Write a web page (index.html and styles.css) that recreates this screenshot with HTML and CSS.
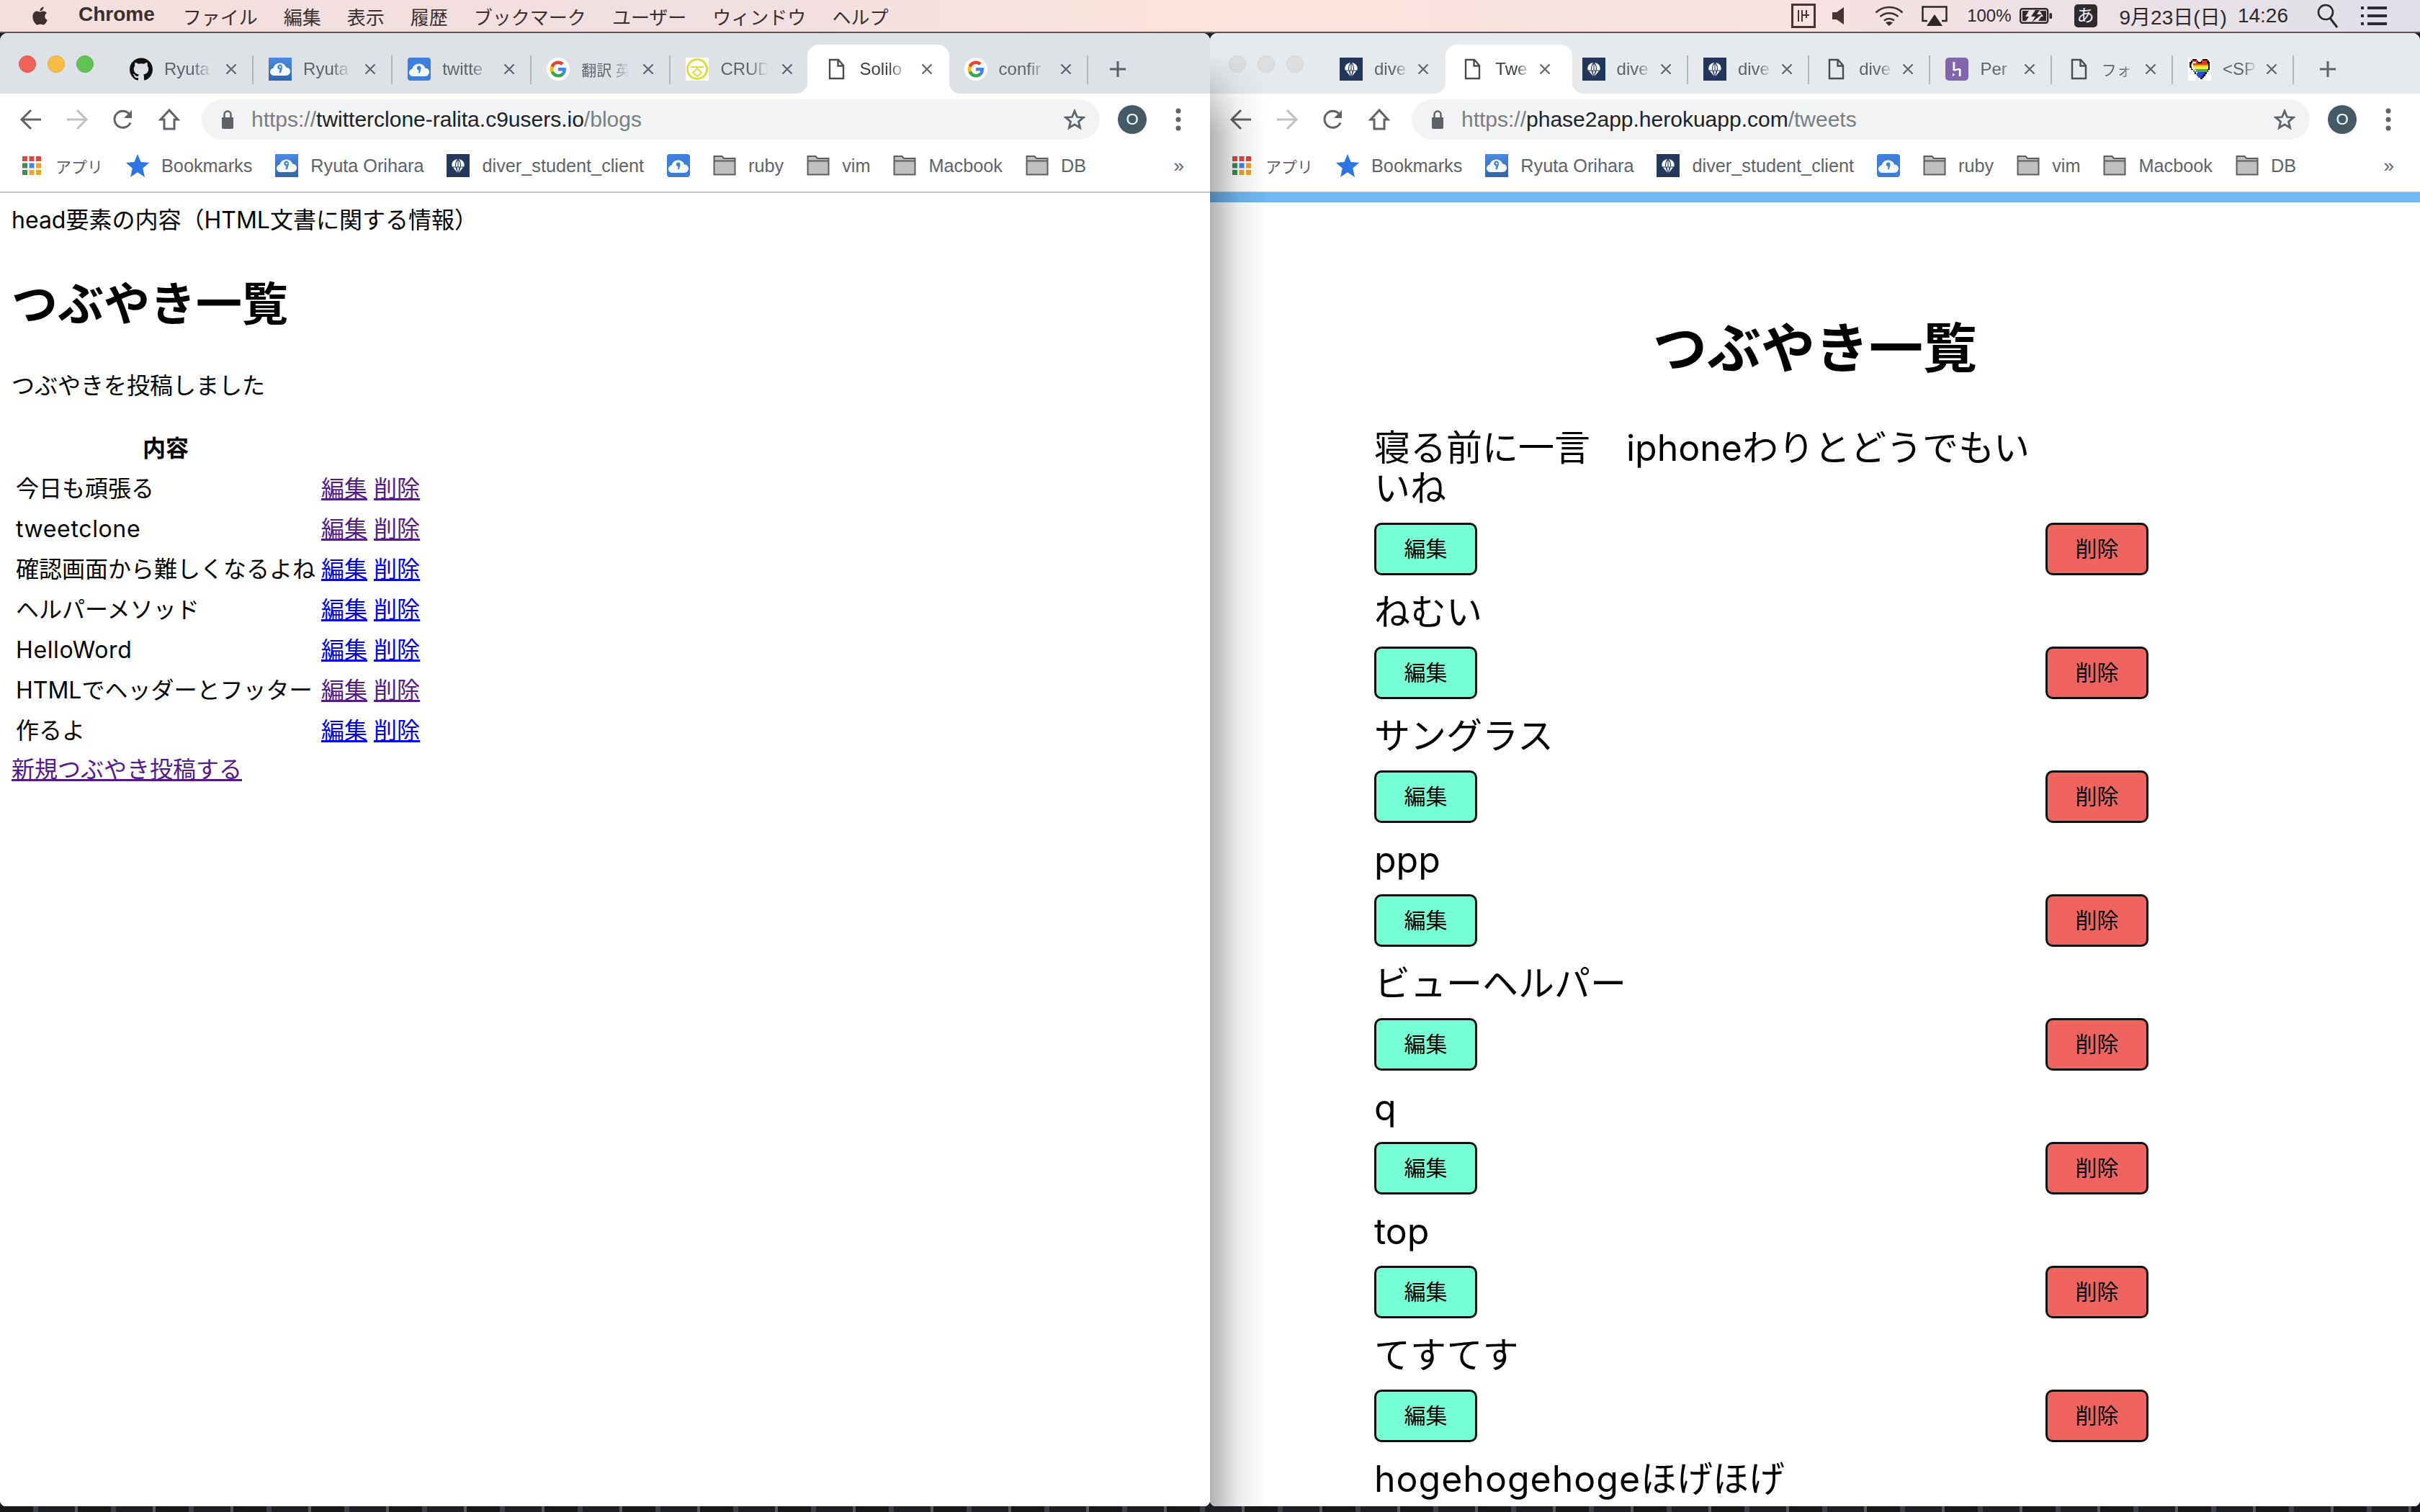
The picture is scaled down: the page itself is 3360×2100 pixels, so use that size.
FILE: index.html
```html
<!DOCTYPE html>
<html lang="ja">
<head>
  <meta charset="UTF-8">
  <title>Two Chrome windows</title>
  <link rel="stylesheet" href="styles.css">
</head>
<body>
  <!-- shared icons -->
  <svg class="sprite" xmlns="http://www.w3.org/2000/svg">
    <defs>
      <linearGradient id="c9-bg" x1="0" y1="0" x2="0" y2="1">
        <stop offset="0" stop-color="#4a8ae0"/>
        <stop offset="1" stop-color="#2f66ad"/>
      </linearGradient>
      <symbol id="i-github" viewBox="0 0 24 24">
        <path fill="#111" d="M12 .297c-6.63 0-12 5.373-12 12 0 5.303 3.438 9.8 8.205 11.385.6.113.82-.258.82-.577 0-.285-.01-1.04-.015-2.04-3.338.724-4.042-1.61-4.042-1.61C4.422 18.07 3.633 17.7 3.633 17.7c-1.087-.744.084-.729.084-.729 1.205.084 1.838 1.236 1.838 1.236 1.07 1.835 2.809 1.305 3.495.998.108-.776.417-1.305.76-1.605-2.665-.3-5.466-1.332-5.466-5.93 0-1.31.465-2.38 1.235-3.22-.135-.303-.54-1.523.105-3.176 0 0 1.005-.322 3.3 1.23.96-.267 1.98-.399 3-.405 1.02.006 2.04.138 3 .405 2.28-1.552 3.285-1.23 3.285-1.23.645 1.653.24 2.873.12 3.176.765.84 1.23 1.91 1.23 3.22 0 4.61-2.805 5.625-5.475 5.92.42.36.81 1.096.81 2.22 0 1.606-.015 2.896-.015 3.286 0 .315.21.69.825.57C20.565 22.092 24 17.592 24 12.297c0-6.627-5.373-12-12-12"/>
      </symbol>
      <symbol id="i-c9" viewBox="0 0 32 32">
        <rect width="32" height="32" fill="url(#c9-bg)"/>
        <path fill="#f4f7fa" d="M8 25c-3.500 0-6-2.300-6-5.300 0-2.800 2-4.800 4.600-5.200C7.400 10.400 11 7.500 15.500 7.500c4.200 0 7.500 2.400 8.700 6 3.500.2 5.800 2.500 5.800 5.600 0 3.400-2.500 5.900-6 5.900z"/>
        <path fill="#3d86d6" fill-rule="evenodd" d="M16 9.500c-2.300 0-3.800 1.500-3.800 3.600s1.400 3.500 3.300 3.500l-1.100 5 2.600-.7 1.900-6.500c.5-2.800-.9-4.900-2.900-4.900zm0 2.300c.8 0 1.300.5 1.300 1.300s-.5 1.300-1.300 1.300-1.300-.5-1.300-1.300.5-1.300 1.300-1.300z"/>
      </symbol>
      <symbol id="i-c9-light" viewBox="0 0 32 32">
        <rect width="32" height="32" rx="4" fill="#3f7fdc"/>
        <path fill="#f4f7fa" d="M8 26c-3.500 0-6-2.300-6-5.300 0-2.800 2-4.800 4.600-5.200C7.400 11.400 11 8.500 15.500 8.500c4.200 0 7.500 2.400 8.700 6 3.500.2 5.800 2.500 5.800 5.600 0 3.400-2.500 5.900-6 5.900z"/>
        <path fill="#3d86d6" d="M16 11.500c-2 0-3.200 1.300-3.200 3s1.200 2.900 2.800 2.900l-.8 4.100 2.200-.5 1.500-5.600c.4-2.300-.7-3.900-2.500-3.900z"/>
      </symbol>
      <symbol id="i-diver" viewBox="0 0 32 32">
        <rect width="32" height="32" fill="#24365c"/>
        <path fill="#fff" d="M16 7c-5.200 0-8.700 3.700-8.700 8 0 1 .2 1.800.5 2.400h16.400c.3-.6.500-1.400.5-2.400 0-4.300-3.500-8-8.700-8zM9 18.600l6 7.400-2.400-7.400zm14 0l-6 7.400 2.400-7.400zm-8.500 0h3L16 26z"/>
        <path fill="none" stroke="#24365c" stroke-width="1.100" d="M16 7c-2.800 2.600-3.800 5.800-3.500 10.400M16 7c2.800 2.600 3.800 5.800 3.500 10.400M16 7v10.400"/>
      </symbol>
      <symbol id="i-google" viewBox="0 0 32 32">
        <circle cx="16" cy="16" r="16" fill="#fff"/>
        <path fill="#4285f4" d="M27 16.300c0-.8-.1-1.600-.2-2.300H16v4.400h6.200c-.3 1.400-1.100 2.600-2.300 3.400v2.800h3.700c2.100-2 3.400-4.900 3.400-8.300z"/>
        <path fill="#34a853" d="M16 27.500c3.100 0 5.700-1 7.600-2.800l-3.700-2.900c-1 .7-2.400 1.100-3.900 1.100-3 0-5.500-2-6.400-4.700H5.800v2.900c1.900 3.800 5.800 6.400 10.200 6.400z"/>
        <path fill="#fbbc05" d="M9.600 18.200c-.5-1.400-.5-2.900 0-4.400v-2.900H5.800c-1.600 3.200-1.600 7 0 10.200z"/>
        <path fill="#ea4335" d="M16 9.100c1.700 0 3.200.6 4.400 1.700l3.300-3.300C21.700 5.600 19 4.500 16 4.500c-4.400 0-8.300 2.600-10.200 6.400l3.800 2.900c.9-2.700 3.400-4.700 6.400-4.700z"/>
      </symbol>
      <symbol id="i-crud" viewBox="0 0 32 32">
        <rect width="32" height="32" fill="#fff"/>
        <circle cx="16" cy="16" r="13.500" fill="none" stroke="#dcdc3c" stroke-width="3"/>
        <path fill="none" stroke="#dcdc3c" stroke-width="2" d="M7 13h18M16 15l6 6-6 5-6-5z"/>
      </symbol>
      <symbol id="i-doc" viewBox="0 0 32 32">
        <path fill="none" stroke="#4a4d50" stroke-width="2.400" d="M7 3h12l7 8v18H7zM18.500 3v8.500H26"/>
      </symbol>
      <symbol id="i-heroku" viewBox="0 0 32 32">
        <rect width="32" height="32" rx="5" fill="#8266ad"/>
        <path fill="#fff" d="M10.500 6h2.800v10.500c2.500-1.300 6.600-2.200 7.900-.4.700 1.100.4 3.300.3 9.900h-2.800l.3-8.300c-1.600-.6-3.900.2-5.700 1.100L10.500 18zM10 21.500l3.300 2.300L10 26z"/>
      </symbol>
      <symbol id="i-heart" viewBox="0 0 32 32">
        <rect width="32" height="32" fill="#fff"/>
        <path fill="#111" d="M6 2h6v2h2v2h4V4h2V2h7v2h2v2h1v11h-2v3h-2v3h-2v3h-2v2h-2v2h-3v-2h-2v-2h-2v-3H9v-3H7v-3H4v-3H2V6h2V4h2z"/>
        <path fill="#e2382c" d="M6 4h7v4h6V4h7v4h2v2H4V8h2z"/>
        <path fill="#f2a12c" d="M4 10h24v2H4z"/>
        <path fill="#f6ea35" d="M5 12h23v4H5z"/>
        <path fill="#55a83c" d="M7 16h20v4H7z"/>
        <path fill="#2a4bd0" d="M10 20h13v3h-2v3h-2v2h-5v-3h-2v-2h-2z"/>
        <path fill="#fff" d="M6 6h5v2H7v6h2v3h2v3h2v2h-2v-3H9v-2H7v-3H5V8h1z"/>
      </symbol>
      <symbol id="i-close" viewBox="0 0 16 16">
        <path fill="none" stroke="#5f6368" stroke-width="2.200" d="M1.500 1.500l13 13M14.500 1.500l-13 13"/>
      </symbol>
      <symbol id="i-plus" viewBox="0 0 24 24">
        <path fill="none" stroke="#5f6368" stroke-width="3" d="M12 1v22M1 12h22"/>
      </symbol>
      <symbol id="i-folder" viewBox="0 0 32 32">
        <path fill="#c0c0c0" stroke="#5a5d60" stroke-width="2" d="M1.500 3h11l2.500 3h15.500v22.500h-29z"/>
        <path fill="none" stroke="#5a5d60" stroke-width="2" d="M1.500 9.500h29"/>
      </symbol>
      <symbol id="i-star" viewBox="0 0 24 24">
        <path fill="#2d74e4" d="M12 0l3.400 8.300 8.600.7-6.600 5.800 2.100 9.200L12 19l-7.500 5 2.100-9.200L0 9l8.600-.7z"/>
      </symbol>
      <symbol id="i-apps" viewBox="0 0 26 26">
        <rect width="7" height="7" fill="#e0483e"/><rect x="9.500" width="7" height="7" fill="#e0483e"/><rect x="19" width="7" height="7" fill="#e0483e"/>
        <rect y="9.500" width="7" height="7" fill="#3c8d4f"/><rect x="9.500" y="9.500" width="7" height="7" fill="#4285f4"/><rect x="19" y="9.500" width="7" height="7" fill="#e4a53a"/>
        <rect y="19" width="7" height="7" fill="#3c8d4f"/><rect x="9.500" y="19" width="7" height="7" fill="#e4a53a"/><rect x="19" y="19" width="7" height="7" fill="#e4a53a"/>
      </symbol>
      <symbol id="i-back" viewBox="0 0 32 32">
        <path fill="none" stroke="currentColor" stroke-width="3" d="M30 16H4M16 3L3 16l13 13"/>
      </symbol>
      <symbol id="i-forward" viewBox="0 0 32 32">
        <path fill="none" stroke="currentColor" stroke-width="3" d="M2 16h26M16 3l13 13-13 13"/>
      </symbol>
      <symbol id="i-reload" viewBox="0 0 32 32">
        <path fill="none" stroke="currentColor" stroke-width="3" d="M26 20.500A11.500 11.500 0 1 1 24 8l3 3.500"/>
        <path fill="currentColor" d="M28 3v11H17z"/>
      </symbol>
      <symbol id="i-home" viewBox="0 0 32 32">
        <path fill="none" stroke="currentColor" stroke-width="3" d="M16 3L4 16h5v13h14V16h5z"/>
      </symbol>
      <symbol id="i-lock" viewBox="0 0 18 28">
        <path fill="#5f6368" d="M1 11h16v14a2 2 0 0 1-2 2H3a2 2 0 0 1-2-2z"/>
        <path fill="none" stroke="#5f6368" stroke-width="2.500" d="M4.500 11V7a4.500 4.500 0 0 1 9 0v4"/>
      </symbol>
      <symbol id="i-bookmark" viewBox="0 0 32 32">
        <path fill="none" stroke="#5f6368" stroke-width="3" d="M16 3.500l3.700 8.800 9.300.7-7.100 6.100 2.200 9.100-8.100-4.900-8.100 4.900 2.200-9.100L3 13l9.300-.7z"/>
      </symbol>
      <symbol id="i-dots" viewBox="0 0 8 32">
        <circle cx="4" cy="4" r="3.500" fill="#5f6368"/><circle cx="4" cy="16" r="3.500" fill="#5f6368"/><circle cx="4" cy="28" r="3.500" fill="#5f6368"/>
      </symbol>
    </defs>
  </svg>

  <!-- Menu bar -->
  <header class="menubar">
    <svg class="apple" viewBox="0 0 24 24"><path fill="#3f2f2f" d="M12.152 6.896c-.948 0-2.415-1.078-3.960-1.040-2.040.027-3.910 1.183-4.961 3.014-2.117 3.675-.546 9.103 1.519 12.090 1.013 1.454 2.208 3.090 3.792 3.039 1.520-.065 2.090-.987 3.935-.987 1.831 0 2.350.987 3.960.948 1.637-.026 2.676-1.480 3.676-2.948 1.156-1.688 1.636-3.325 1.662-3.415-.039-.013-3.182-1.221-3.220-4.857-.026-3.040 2.480-4.494 2.597-4.559-1.429-2.090-3.623-2.324-4.390-2.376-2-.156-3.675 1.090-4.610 1.090zM15.530 3.830c.843-1.012 1.400-2.427 1.245-3.830-1.207.052-2.662.805-3.532 1.818-.780.896-1.454 2.338-1.273 3.714 1.338.104 2.715-.688 3.559-1.701"/></svg>
    <nav class="menu">
      <span class="menu-app">Chrome</span>
      <span>ファイル</span>
      <span>編集</span>
      <span>表示</span>
      <span>履歴</span>
      <span>ブックマーク</span>
      <span>ユーザー</span>
      <span>ウィンドウ</span>
      <span>ヘルプ</span>
    </nav>
    <div class="tray">
      <svg class="tray-input" viewBox="0 0 34 34"><path fill="none" stroke="#46352f" stroke-width="3" d="M1.500 1.500h31v31h-31z"/><path fill="none" stroke="#46352f" stroke-width="2" d="M10 9v16M15 9v16M15 16h10M21 9v11"/></svg>
      <svg class="tray-sound ml-23" viewBox="0 0 16 24"><path fill="#46352f" d="M0 7h6l10-7v24L6 17H0z"/></svg>
      <svg class="tray-wifi ml-43" viewBox="0 0 40 28"><path fill="none" stroke="#3c3030" stroke-width="2.500" d="M1.500 9.500c10-10 27-10 37 0M7.500 15c7-6.500 18-6.500 25 0M13 20.500c4-3.300 10-3.300 14 0"/><path fill="#3c3030" d="M20 28l-5-4.500c3-2 7-2 10 0z"/></svg>
      <svg class="tray-airplay ml-25" viewBox="0 0 36 28"><path fill="none" stroke="#2e2828" stroke-width="2.500" d="M8 21H1.500V1.500h33V21H28"/><path fill="#2e2828" d="M18 12l11 16H7z"/></svg>
      <span class="tray-pct ml-27">100%</span>
      <svg class="tray-battery ml-11" viewBox="0 0 45 22"><rect x="1.200" y="1.200" width="38" height="19.600" rx="3" fill="none" stroke="#2e2828" stroke-width="2.400"/><path fill="#2e2828" d="M4 4h9l-5 8h5l-4 6H4zM22 3l-6 9h6l-5 8 14-11h-7l4-6zM28 4h9v14h-11l4-6h3z"/><rect x="41.500" y="7" width="3.500" height="8" rx="1.500" fill="#2e2828"/></svg>
      <span class="tray-ime ml-31">あ</span>
      <span class="tray-text ml-31">9月23日(日)</span>
      <span class="tray-text ml-15">14:26</span>
      <svg class="tray-search ml-40" viewBox="0 0 30 34"><circle cx="12" cy="12" r="10" fill="none" stroke="#2e2828" stroke-width="2.600"/><path stroke="#2e2828" stroke-width="3" d="M18 20l10 13"/></svg>
      <svg class="tray-list ml-31" viewBox="0 0 36 28"><path fill="#2e2a33" d="M0 1h4v4H0zM9 1h27v4H9zM0 12h4v4H0zM9 12h27v4H9zM0 23h4v4H0zM9 23h27v4H9z"/></svg>
    </div>
  </header>

  <main class="desktop">
    <!-- Left window: blogs -->
    <section class="window window-active">
      <div class="tabstrip">
        <div class="lights">
          <span class="light light-red"></span>
          <span class="light light-yellow"></span>
          <span class="light light-green"></span>
        </div>
        <div class="tab sep"><svg class="favicon"><use href="#i-github"/></svg><span class="tab-title">Ryuta</span><svg class="close"><use href="#i-close"/></svg></div>
        <div class="tab sep"><svg class="favicon"><use href="#i-c9"/></svg><span class="tab-title">Ryuta</span><svg class="close"><use href="#i-close"/></svg></div>
        <div class="tab sep"><svg class="favicon"><use href="#i-c9-light"/></svg><span class="tab-title">twitte</span><svg class="close"><use href="#i-close"/></svg></div>
        <div class="tab sep"><svg class="favicon"><use href="#i-google"/></svg><span class="tab-title tab-title-jp">翻訳 英</span><svg class="close"><use href="#i-close"/></svg></div>
        <div class="tab"><svg class="favicon"><use href="#i-crud"/></svg><span class="tab-title">CRUD</span><svg class="close"><use href="#i-close"/></svg></div>
        <div class="tab active"><svg class="favicon"><use href="#i-doc"/></svg><span class="tab-title">Solilo</span><svg class="close"><use href="#i-close"/></svg></div>
        <div class="tab sep"><svg class="favicon"><use href="#i-google"/></svg><span class="tab-title">confir</span><svg class="close"><use href="#i-close"/></svg></div>
        <svg class="new-tab"><use href="#i-plus"/></svg>
      </div>

      <div class="toolbar">
        <svg class="nav-btn"><use href="#i-back"/></svg>
        <svg class="nav-btn nav-off"><use href="#i-forward"/></svg>
        <svg class="nav-btn"><use href="#i-reload"/></svg>
        <svg class="nav-btn"><use href="#i-home"/></svg>
        <div class="omnibox">
          <svg class="lock"><use href="#i-lock"/></svg>
          <span class="url">https://<b>twitterclone-ralita.c9users.io</b>/blogs</span>
          <svg class="bookmark-star"><use href="#i-bookmark"/></svg>
        </div>
        <span class="avatar">O</span>
        <svg class="dots"><use href="#i-dots"/></svg>
      </div>

      <div class="bookmarks">
        <span class="bm bm-jp"><svg class="bm-apps"><use href="#i-apps"/></svg>アプリ</span>
        <span class="bm"><svg class="bm-icon"><use href="#i-star"/></svg>Bookmarks</span>
        <span class="bm"><svg class="bm-icon"><use href="#i-c9"/></svg>Ryuta Orihara</span>
        <span class="bm"><svg class="bm-icon"><use href="#i-diver"/></svg>diver_student_client</span>
        <span class="bm"><svg class="bm-icon"><use href="#i-c9-light"/></svg></span>
        <span class="bm"><svg class="bm-icon"><use href="#i-folder"/></svg>ruby</span>
        <span class="bm"><svg class="bm-icon"><use href="#i-folder"/></svg>vim</span>
        <span class="bm"><svg class="bm-icon"><use href="#i-folder"/></svg>Macbook</span>
        <span class="bm"><svg class="bm-icon"><use href="#i-folder"/></svg>DB</span>
        <span class="bm-more">»</span>
      </div>

      <div class="page page-blogs">
        <p class="blog-head">head要素の内容（HTML文書に関する情報）</p>
        <h1 class="blog-title">つぶやき一覧</h1>
        <p class="blog-notice">つぶやきを投稿しました</p>
        <table class="blog-table">
          <tr><th>内容</th><th></th></tr>
          <tr><td>今日も頑張る</td><td><a class="seen" href="#">編集</a> <a class="seen" href="#">削除</a></td></tr>
          <tr><td class="latin">tweetclone</td><td><a class="seen" href="#">編集</a> <a class="seen" href="#">削除</a></td></tr>
          <tr><td>確認画面から難しくなるよね</td><td><a href="#">編集</a> <a href="#">削除</a></td></tr>
          <tr><td>ヘルパーメソッド</td><td><a href="#">編集</a> <a href="#">削除</a></td></tr>
          <tr><td class="latin">HelloWord</td><td><a href="#">編集</a> <a href="#">削除</a></td></tr>
          <tr><td>HTMLでヘッダーとフッター</td><td><a class="seen" href="#">編集</a> <a class="seen" href="#">削除</a></td></tr>
          <tr><td>作るよ</td><td><a href="#">編集</a> <a href="#">削除</a></td></tr>
        </table>
        <a class="seen new-link" href="#">新規つぶやき投稿する</a>
      </div>
    </section>

    <!-- Right window: tweets -->
    <section class="window window-back">
      <div class="tabstrip">
        <div class="lights">
          <span class="light"></span>
          <span class="light"></span>
          <span class="light"></span>
        </div>
        <div class="tab"><svg class="favicon"><use href="#i-diver"/></svg><span class="tab-title">dive</span><svg class="close"><use href="#i-close"/></svg></div>
        <div class="tab active"><svg class="favicon"><use href="#i-doc"/></svg><span class="tab-title">Twe</span><svg class="close"><use href="#i-close"/></svg></div>
        <div class="tab sep"><svg class="favicon"><use href="#i-diver"/></svg><span class="tab-title">dive</span><svg class="close"><use href="#i-close"/></svg></div>
        <div class="tab sep"><svg class="favicon"><use href="#i-diver"/></svg><span class="tab-title">dive</span><svg class="close"><use href="#i-close"/></svg></div>
        <div class="tab sep"><svg class="favicon"><use href="#i-doc"/></svg><span class="tab-title">dive</span><svg class="close"><use href="#i-close"/></svg></div>
        <div class="tab sep"><svg class="favicon"><use href="#i-heroku"/></svg><span class="tab-title">Per</span><svg class="close"><use href="#i-close"/></svg></div>
        <div class="tab sep"><svg class="favicon"><use href="#i-doc"/></svg><span class="tab-title tab-title-jp">フォ</span><svg class="close"><use href="#i-close"/></svg></div>
        <div class="tab sep"><svg class="favicon"><use href="#i-heart"/></svg><span class="tab-title">&lt;SP</span><svg class="close"><use href="#i-close"/></svg></div>
        <svg class="new-tab"><use href="#i-plus"/></svg>
      </div>

      <div class="toolbar">
        <svg class="nav-btn"><use href="#i-back"/></svg>
        <svg class="nav-btn nav-off"><use href="#i-forward"/></svg>
        <svg class="nav-btn"><use href="#i-reload"/></svg>
        <svg class="nav-btn"><use href="#i-home"/></svg>
        <div class="omnibox">
          <svg class="lock"><use href="#i-lock"/></svg>
          <span class="url">https://<b>phase2app.herokuapp.com</b>/tweets</span>
          <svg class="bookmark-star"><use href="#i-bookmark"/></svg>
        </div>
        <span class="avatar">O</span>
        <svg class="dots"><use href="#i-dots"/></svg>
      </div>

      <div class="bookmarks">
        <span class="bm bm-jp"><svg class="bm-apps"><use href="#i-apps"/></svg>アプリ</span>
        <span class="bm"><svg class="bm-icon"><use href="#i-star"/></svg>Bookmarks</span>
        <span class="bm"><svg class="bm-icon"><use href="#i-c9"/></svg>Ryuta Orihara</span>
        <span class="bm"><svg class="bm-icon"><use href="#i-diver"/></svg>diver_student_client</span>
        <span class="bm"><svg class="bm-icon"><use href="#i-c9-light"/></svg></span>
        <span class="bm"><svg class="bm-icon"><use href="#i-folder"/></svg>ruby</span>
        <span class="bm"><svg class="bm-icon"><use href="#i-folder"/></svg>vim</span>
        <span class="bm"><svg class="bm-icon"><use href="#i-folder"/></svg>Macbook</span>
        <span class="bm"><svg class="bm-icon"><use href="#i-folder"/></svg>DB</span>
        <span class="bm-more">»</span>
      </div>

      <div class="page page-tweets">
        <div class="site-bar"></div>
        <h1 class="tweets-title">つぶやき一覧</h1>
        <div class="tweets">
          <article class="tweet">
            <p class="tweet-text">寝る前に一言　iphoneわりとどうでもいいね</p>
            <div class="tweet-actions"><a class="btn btn-edit" href="#">編集</a><a class="btn btn-delete" href="#">削除</a></div>
          </article>
          <article class="tweet">
            <p class="tweet-text">ねむい</p>
            <div class="tweet-actions"><a class="btn btn-edit" href="#">編集</a><a class="btn btn-delete" href="#">削除</a></div>
          </article>
          <article class="tweet">
            <p class="tweet-text">サングラス</p>
            <div class="tweet-actions"><a class="btn btn-edit" href="#">編集</a><a class="btn btn-delete" href="#">削除</a></div>
          </article>
          <article class="tweet">
            <p class="tweet-text">ppp</p>
            <div class="tweet-actions"><a class="btn btn-edit" href="#">編集</a><a class="btn btn-delete" href="#">削除</a></div>
          </article>
          <article class="tweet">
            <p class="tweet-text">ビューヘルパー</p>
            <div class="tweet-actions"><a class="btn btn-edit" href="#">編集</a><a class="btn btn-delete" href="#">削除</a></div>
          </article>
          <article class="tweet">
            <p class="tweet-text">q</p>
            <div class="tweet-actions"><a class="btn btn-edit" href="#">編集</a><a class="btn btn-delete" href="#">削除</a></div>
          </article>
          <article class="tweet">
            <p class="tweet-text">top</p>
            <div class="tweet-actions"><a class="btn btn-edit" href="#">編集</a><a class="btn btn-delete" href="#">削除</a></div>
          </article>
          <article class="tweet">
            <p class="tweet-text">てすてす</p>
            <div class="tweet-actions"><a class="btn btn-edit" href="#">編集</a><a class="btn btn-delete" href="#">削除</a></div>
          </article>
          <article class="tweet">
            <p class="tweet-text"><span class="latin">hogehogehoge</span>ほげほげ</p>
          </article>
        </div>
      </div>
      <div class="window-shadow"></div>
    </section>
  </main>
</body>
</html>
```

FILE: styles.css
```css
* {
  box-sizing: border-box;
}

html,
body {
  margin: 0;
  height: 100%;
}

body {
  width: 3360px;
  height: 2100px;
  overflow: hidden;
  font-family: "Liberation Sans", "Noto Sans CJK JP", sans-serif;
  color: #000;
  display: flex;
  flex-direction: column;
  background: repeating-linear-gradient(90deg, #17171a 0 46px, #3b3e46 46px 53px, #1d1e22 53px 104px, #55585f 104px 108px);
}

.sprite {
  display: block;
  flex: none;
  width: 0;
  height: 0;
}

/* Menu bar */
.menubar {
  flex: none;
  height: 46px;
  padding-left: 43px;
  display: flex;
  align-items: center;
  background: linear-gradient(90deg, #f4dfdd 0%, #f0e0e2 30%, #fde4dc 50%, #f6e2e2 75%, #dfe0ea 100%);
  border-bottom: 2px solid #6b5050;
  color: #3a2e2e;
  font-size: 26px;
}

.apple {
  width: 25px;
  height: 30px;
  margin-right: 41px;
}

.menu {
  display: flex;
  gap: 36px;
}

.menu-app {
  font-size: 28px;
  font-weight: bold;
  margin-right: 3px;
}

.tray {
  margin-left: auto;
  padding-right: 46px;
  display: flex;
  align-items: center;
  color: #2e2828;
}

.tray-input { width: 34px; height: 34px; }
.tray-sound { width: 16px; height: 24px; }
.tray-wifi { width: 40px; height: 28px; }
.tray-airplay { width: 36px; height: 28px; }
.tray-battery { width: 45px; height: 22px; }
.tray-search { width: 30px; height: 34px; }
.tray-list { width: 36px; height: 28px; }
.tray-pct { font-size: 24px; }
.tray-text { font-size: 28px; }

.tray-ime {
  width: 32px;
  height: 32px;
  border-radius: 5px;
  background: #2f2a2e;
  color: #eee;
  font-size: 24px;
  line-height: 32px;
  text-align: center;
}

.ml-11 { margin-left: 11px; }
.ml-15 { margin-left: 15px; }
.ml-23 { margin-left: 23px; }
.ml-25 { margin-left: 25px; }
.ml-27 { margin-left: 27px; }
.ml-31 { margin-left: 31px; }
.ml-40 { margin-left: 40px; }
.ml-43 { margin-left: 43px; }

/* Windows */
.desktop {
  flex: none;
  height: 2046px;
  display: flex;
}

.window {
  position: relative;
  width: 1680px;
  height: 100%;
  display: flex;
  flex-direction: column;
  overflow: hidden;
  background: #fff;
  border-radius: 10px 10px 8px 8px;
}

.tabstrip {
  flex: none;
  isolation: isolate;
  height: 84px;
  padding-top: 16px;
  display: flex;
  background: #dee1e6;
}

.window-back .tabstrip {
  background: #e7eaed;
}

.lights {
  flex: none;
  width: 164px;
  height: 54px;
  padding-left: 26px;
  display: flex;
  align-items: center;
  gap: 16px;
}

.light {
  width: 24px;
  height: 24px;
  border-radius: 50%;
  background: #dcdee0;
  border: 1px solid #d2d4d6;
}

.light-red { background: #f0635b; border-color: #e0524b; }
.light-yellow { background: #f8bd46; border-color: #e5aa38; }
.light-green { background: #5fc454; border-color: #4fb045; }

.tab {
  flex: none;
  position: relative;
  width: 193.1px;
  height: 68px;
  padding: 0 28px 0 16px;
  display: flex;
  align-items: center;
  font-size: 24px;
  color: #5f6368;
}

.window-back .tab {
  width: 168.3px;
}

.tab.sep::after {
  content: "";
  position: absolute;
  top: 15px;
  right: 5px;
  width: 2px;
  height: 40px;
  background: #b3b6ba;
}

.tab.active {
  color: #3c4043;
}

.tab.active::before {
  content: "";
  position: absolute;
  z-index: -1;
  top: 0;
  bottom: 0;
  left: -8px;
  right: 5px;
  background: #fff;
  border-radius: 16px 16px 0 0;
}

.tab.active::after {
  content: "";
  position: absolute;
  z-index: -1;
  left: -24px;
  right: -11px;
  bottom: 0;
  height: 16px;
  background:
    radial-gradient(circle at 0 0, transparent 16px, #fff 16.5px) left / 16px 16px no-repeat,
    radial-gradient(circle at 100% 0, transparent 16px, #fff 16.5px) right / 16px 16px no-repeat;
}

.window-back .tab.active::before {
  left: -5px;
  right: -2px;
}

.window-back .tab.active::after {
  left: -21px;
  right: -18px;
}

.favicon {
  flex: none;
  width: 32px;
  height: 32px;
  margin-right: 16px;
}

.tab-title {
  flex: 1;
  min-width: 0;
  margin-right: 18px;
  white-space: nowrap;
  -webkit-mask-image: linear-gradient(90deg, #000 60%, transparent 100%);
  mask-image: linear-gradient(90deg, #000 60%, transparent 100%);
}

.window-back .tab-title {
  margin-right: 12px;
}

.tab-title-jp {
  font-size: 21px;
}

.close {
  flex: none;
  width: 16px;
  height: 16px;
}

.new-tab {
  flex: none;
  width: 24px;
  height: 24px;
  margin: 22px 0 0 24px;
}

.window-back .new-tab {
  margin-left: 30px;
}

/* Toolbar */
.toolbar {
  flex: none;
  height: 72px;
  padding-left: 27px;
  display: flex;
  align-items: center;
}

.nav-btn {
  flex: none;
  width: 32px;
  height: 32px;
  margin-right: 32px;
  color: #5f6368;
}

.nav-off {
  color: #bdc1c6;
}

.omnibox {
  flex: none;
  width: 1247px;
  height: 56px;
  margin-left: -3px;
  padding: 0 20px 0 27px;
  display: flex;
  align-items: center;
  background: #f1f3f4;
  border-radius: 28px;
}

.lock {
  flex: none;
  width: 18px;
  height: 28px;
  margin-right: 24px;
}

.url {
  flex: 1;
  font-size: 30px;
  color: #7a7e83;
  white-space: nowrap;
}

.url b {
  font-weight: normal;
  color: #202124;
}

.bookmark-star {
  flex: none;
  width: 30px;
  height: 30px;
}

.avatar {
  flex: none;
  width: 40px;
  height: 40px;
  margin-left: 25px;
  border-radius: 50%;
  background: #455a64;
  color: #fff;
  font-size: 22px;
  line-height: 40px;
  text-align: center;
}

.dots {
  flex: none;
  width: 8px;
  height: 32px;
  margin-left: 40px;
}

/* Bookmarks */
.bookmarks {
  flex: none;
  height: 64px;
  padding: 0 0 8px 28px;
  display: flex;
  align-items: center;
  gap: 32px;
  font-size: 25.25px;
  color: #5f6368;
}

.bm {
  display: flex;
  align-items: center;
  white-space: nowrap;
}

.bm-jp {
  font-size: 22px;
}

.bm-icon {
  flex: none;
  width: 32px;
  height: 32px;
  margin-right: 17px;
}

.bm:nth-child(5) .bm-icon {
  margin-right: 0;
}

.bm-apps {
  flex: none;
  width: 26px;
  height: 26px;
  margin: 0 20px 0 3px;
}

.bm-more {
  margin-left: auto;
  margin-right: 36px;
  font-size: 26px;
}

/* Left page */
.page {
  flex: 1;
  min-height: 0;
  overflow: hidden;
  background: #fff;
  font-family: Inter, "Noto Sans CJK JP", sans-serif;
}

.latin {
  letter-spacing: 0.02em;
}

.page-blogs {
  border-top: 2px solid #c4c4c4;
  padding: 18px 16px 16px;
  font-size: 32px;
}

.blog-head,
.blog-notice {
  margin: 0;
  line-height: 40px;
}

.blog-title {
  margin: 56px 0 0;
  font-size: 64px;
  line-height: 80px;
}

.blog-notice {
  margin-top: 54px;
}

.blog-table {
  margin-top: 37px;
  border-spacing: 4px;
}

.blog-table th,
.blog-table td {
  padding: 2px;
  line-height: 48px;
}

.blog-table th {
  font-weight: bold;
  text-align: center;
}

.blog-table a,
.new-link {
  color: #0000ee;
}

.blog-table a.seen,
.new-link.seen {
  color: #551a8b;
}

.new-link {
  display: inline-block;
  line-height: 48px;
}

/* Right page */
.site-bar {
  height: 15px;
  background: #70b9f6;
  border-top: 1px solid #b9c6d2;
}

.tweets-title {
  margin: 161px 0 68px;
  font-size: 75px;
  line-height: 84px;
  text-align: center;
}

.tweets {
  width: 1075px;
  margin-left: 228px;
}

.tweet {
  margin-bottom: 23px;
}

.tweet-text {
  width: 940px;
  margin: 0 0 20px;
  font-size: 50px;
  line-height: 56px;
}

.tweet-actions {
  display: flex;
  justify-content: space-between;
}

.btn {
  width: 143px;
  height: 73px;
  border: 3px solid #111;
  border-radius: 10px;
  color: #000;
  font-size: 30px;
  line-height: 67px;
  text-align: center;
  text-decoration: none;
}

.btn-edit {
  background: #76ffd4;
}

.btn-delete {
  background: #f0645f;
}

.window-shadow {
  position: absolute;
  top: 0;
  bottom: 0;
  left: 0;
  width: 80px;
  pointer-events: none;
  background: linear-gradient(90deg, rgba(0, 0, 0, 0.3), rgba(0, 0, 0, 0.08) 50%, transparent);
  -webkit-mask-image: linear-gradient(180deg, transparent 30px, #000 140px);
  mask-image: linear-gradient(180deg, transparent 30px, #000 140px);
}
```
